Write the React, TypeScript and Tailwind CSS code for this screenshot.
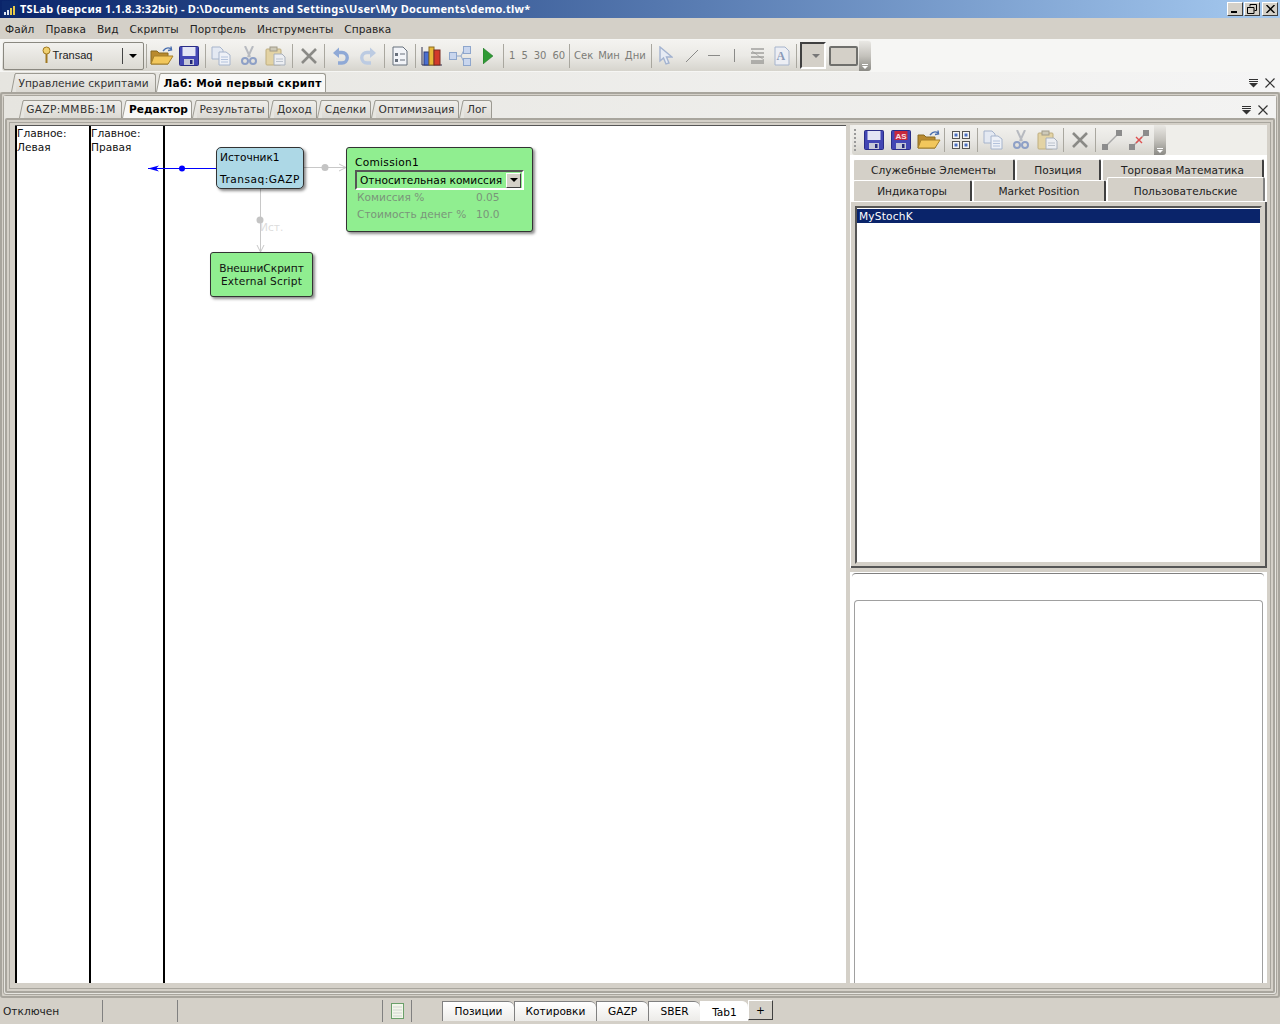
import React from "react";

const Sep = ({ w = "w-[6px]" }: { w?: string }) => (
  <div className={`${w} h-[24px] flex justify-center shrink-0`}>
    <div className="w-px h-full bg-[#a9a79f]" />
  </div>
);

const Slot = ({ w = "w-[27px]", children }: { w?: string; children: React.ReactNode }) => (
  <div className={`${w} h-[26px] flex items-center justify-center shrink-0`}>{children}</div>
);

const Folder = () => (
  <svg width="24" height="20" viewBox="0 0 24 20">
    <path d="M1 5 L1 18 L18 18 L18 7 L9 7 L7 5 Z" fill="#b98a2e" stroke="#8a6a20" />
    <path d="M4 10 L23 10 L18 18 L1 18 Z" fill="#f2c75c" stroke="#a5802a" />
    <path d="M13 5 Q17 0 21 3 M21 0.5 L21.5 4 L18 4.5" fill="none" stroke="#4a6fb0" strokeWidth="1.4" />
  </svg>
);
const Floppy = ({ red }: { red?: boolean }) => (
  <svg width="20" height="20" viewBox="0 0 20 20">
    <rect x="0.5" y="0.5" width="19" height="19" rx="1" fill="#4347b4" stroke="#2a2d86" />
    <rect x="3.5" y="1" width="13" height="9" fill={red ? "#c8283c" : "#e3e5f4"} />
    {red && (
      <text x="10" y="8.5" textAnchor="middle" fontSize="8" fontWeight="bold" fill="#f8e0e4" fontFamily="Liberation Sans, sans-serif">
        AS
      </text>
    )}
    <rect x="5" y="13" width="10" height="6" fill="#c6c8d8" />
    <rect x="11" y="14" width="2.5" height="4" fill="#23287a" />
  </svg>
);
const CopyIc = () => (
  <svg width="22" height="20" viewBox="0 0 22 20">
    <path d="M1 1 H9 L12 4 V13 H1 Z" fill="#e4e9f2" stroke="#a6b4cc" />
    <path d="M8 6 H15 L19 9 V19 H8 Z" fill="#eef1f7" stroke="#a6b4cc" />
    <path d="M10 11 H17 M10 13.5 H17 M10 16 H17" stroke="#b3c2dc" />
  </svg>
);
const CutIc = () => (
  <svg width="16" height="20" viewBox="0 0 16 20">
    <path d="M4 0 L9 11 M12 0 L7 11" stroke="#b7bac0" strokeWidth="2" fill="none" />
    <circle cx="4" cy="15" r="3" fill="none" stroke="#8ea0c6" strokeWidth="2" />
    <circle cx="12" cy="15" r="3" fill="none" stroke="#8ea0c6" strokeWidth="2" />
  </svg>
);
const PasteIc = () => (
  <svg width="22" height="20" viewBox="0 0 22 20">
    <rect x="1" y="3" width="15" height="16" rx="1" fill="#e3d3a4" stroke="#bfae7e" />
    <rect x="5" y="1" width="7" height="4" fill="#cdc9b8" stroke="#a09a88" />
    <path d="M9 8 H17 L20 11 V19 H9 Z" fill="#eceef2" stroke="#a8b0bc" />
    <path d="M11 13 H18 M11 15.5 H18" stroke="#bcc3cd" />
  </svg>
);
const XIc = () => (
  <svg width="18" height="18" viewBox="0 0 18 18">
    <path d="M2 2 L16 16 M16 2 L2 16" stroke="#8a8a86" strokeWidth="2.6" />
  </svg>
);
const Undo = ({ flip }: { flip?: boolean }) => (
  <svg width="18" height="18" viewBox="0 0 18 18" className={flip ? "-scale-x-100" : ""}>
    <path d="M4 5.5 H10 A5 5 0 0 1 10 16 H6" fill="none" stroke={flip ? "#bccbe2" : "#8fa9d6"} strokeWidth="3.4" />
    <path d="M1 6 L7 0.5 L7 11 Z" fill={flip ? "#bccbe2" : "#8fa9d6"} />
  </svg>
);
const DocIc = () => (
  <svg width="16" height="20" viewBox="0 0 16 20">
    <path d="M1 1 H11 L15 5 V19 H1 Z" fill="#f2f4f8" stroke="#67707c" />
    <rect x="3" y="7" width="3" height="3" fill="#68707c" />
    <rect x="3" y="13" width="3" height="3" fill="#68707c" />
    <path d="M8 8 H13 M8 14 H13" stroke="#68707c" />
  </svg>
);
const ChartIc = () => (
  <svg width="22" height="22" viewBox="0 0 22 22">
    <path d="M1 2 V20 H21" stroke="#303050" fill="none" />
    <rect x="3" y="7" width="5" height="13" fill="#4a6fd0" stroke="#2a3a7a" />
    <rect x="8" y="2" width="5" height="18" fill="#e8b93a" stroke="#8a6a20" />
    <rect x="13" y="5" width="6" height="15" fill="#d23a2a" stroke="#7a2a20" />
  </svg>
);
const FlowIc = () => (
  <svg width="22" height="20" viewBox="0 0 22 20">
    <path d="M7 10 H12 L15 4 M12 10 L15 16" stroke="#8ea6cc" fill="none" />
    <rect x="0.5" y="6.5" width="7" height="7" fill="#c9d6ee" stroke="#8ea6cc" />
    <rect x="14.5" y="0.5" width="7" height="7" fill="#c9d6ee" stroke="#8ea6cc" />
    <rect x="14.5" y="12.5" width="7" height="7" fill="#c9d6ee" stroke="#8ea6cc" />
  </svg>
);
const Play = () => (
  <svg width="10" height="16" viewBox="0 0 10 16">
    <path d="M0 0 L10 8 L0 16 Z" fill="#2f9a35" stroke="#1e6e24" strokeWidth="0.5" />
  </svg>
);
const Cursor = () => (
  <svg width="14" height="20" viewBox="0 0 14 20">
    <path d="M1 1 L1 15 L4.5 12 L7 18 L10 17 L7.5 11 L13 11 Z" fill="#e6ebf4" stroke="#a3b3d0" strokeWidth="1.4" />
  </svg>
);
const LinesIc = () => (
  <svg width="14" height="16" viewBox="0 0 14 16">
    <path d="M0 1 H13 M0 5 H13 M0 9 H13 M0 13 H13 M0 15 H13" stroke="#7b7b78" />
    <path d="M1 3 L13 12" stroke="#9a9a96" strokeWidth="0.7" />
  </svg>
);
const AIc = () => (
  <svg width="16" height="20" viewBox="0 0 16 20">
    <path d="M1 1 H11 L15 5 V19 H1 Z" fill="#eceef4" stroke="#a6b4cc" />
  </svg>
);
const GridIc = () => (
  <svg width="18" height="18" viewBox="0 0 18 18">
    {[0, 10].map((x) =>
      [0, 10].map((y) => (
        <g key={`${x}-${y}`}>
          <rect x={x + 0.5} y={y + 0.5} width="7" height="7" fill="#f4f4f4" stroke="#555" />
          <rect x={x + 2.5} y={y + 2.5} width="3" height="3" fill="#4a6fc0" />
        </g>
      ))
    )}
  </svg>
);
const Link = ({ broken }: { broken?: boolean }) => (
  <svg width="20" height="20" viewBox="0 0 20 20">
    <path d="M4 16 L16 4" stroke="#a8a8a8" strokeWidth="1.4" />
    <rect x="0" y="14" width="6" height="6" fill="#8c8c8c" />
    <rect x="14" y="0" width="6" height="6" fill="#8c8c8c" />
    {broken && <path d="M7 7 L13 13 M13 7 L7 13" stroke="#e05050" strokeWidth="1.4" />}
  </svg>
);
const Overflow = () => (
  <div className="w-[12px] h-[30px] rounded-r-[3px] bg-gradient-to-b from-[#e9e8e4] via-[#c4c2bc] to-[#8b8a85] flex flex-col items-center justify-end pb-[2px] gap-px">
    <div className="w-[6px] h-px bg-white" />
    <div className="border-x-[3px] border-t-[3px] border-x-transparent border-t-white" />
  </div>
);
const Chevron = () => (
  <svg width="11" height="9" viewBox="0 0 11 9">
    <path d="M1 0.5 H10 M1 2.5 H10" stroke="#333" strokeWidth="1.2" />
    <path d="M1 4 H10 L5.5 8.5 Z" fill="#333" />
  </svg>
);
const Cross = () => (
  <svg width="10" height="10" viewBox="0 0 10 10">
    <path d="M0.5 0.5 L9.5 9.5 M9.5 0.5 L0.5 9.5" stroke="#333" strokeWidth="1.2" />
  </svg>
);
const WinBtn = ({ children }: { children: React.ReactNode }) => (
  <div className="w-[16px] h-[14px] bg-[#d4d0c8] border border-t-white border-l-white border-r-[#404040] border-b-[#404040] flex items-center justify-center">
    {children}
  </div>
);

const TopTab = ({ label, active, w, h = "h-[19px]", extra = "" }: { label: string; active?: boolean; w: string; h?: string; extra?: string }) => (
  <div className={`${w} ${h} shrink-0 relative pl-[4px]`}>
    <svg className="absolute left-0 top-0 h-full" width="5" viewBox="0 0 5 19" preserveAspectRatio="none">
      <path d="M0 19 L4 1 L5 0 V19 Z" fill={active ? "#f8f8f6" : "#e6e5e0"} />
      <path d="M0.5 19 L4 1 L5 0.5" fill="none" stroke="#9c9a92" />
    </svg>
    <div
      className={`h-full flex items-center justify-center rounded-tr-[3px] border-t border-r border-[#9c9a92] ${extra} ${
        active ? "bg-[#f8f8f6] font-bold text-black" : "bg-gradient-to-b from-[#efeeea] to-[#dcdad4] text-[#333]"
      }`}
    >
      {label}
    </div>
  </div>
);

const SideTab = ({ label, w, active }: { label: string; w: string; active?: boolean }) => (
  <div
    className={`${w} shrink-0 bg-[#d4d0c8] flex items-center justify-center rounded-t-[2px] text-[#222] ${
      active
        ? "h-[24px] -mt-[3px] pt-[3px] border-t border-l border-white border-r-2 border-r-[#808080]"
        : "h-[21px] border-t border-l border-white border-r-2 border-r-[#404040]"
    }`}
  >
    {label}
  </div>
);

const BottomTab = ({ label, w, active }: { label: string; w: string; active?: boolean }) => (
  <div
    className={`${w} h-[20px] shrink-0 flex items-center justify-center rounded-tr-[6px] border-t border-l border-[#808080] ${
      active ? "bg-white pt-[2px] border-t-white border-l-white" : "bg-gradient-to-b from-white to-[#ecebe8]"
    }`}
  >
    {label}
  </div>
);

export default function App() {
  return (
    <div className="w-[1280px] h-[1024px] overflow-hidden bg-[#d4d0c8] font-['DejaVu_Sans',sans-serif] text-[10.6px] leading-[13px] text-black flex flex-col">
      {/* Title bar */}
      <div className="h-[18px] shrink-0 bg-gradient-to-r from-[#0a246a] to-[#a6caf0] flex items-center pl-[2px] pr-[2px] text-white">
        <svg width="16" height="16" viewBox="0 0 16 16" className="shrink-0">
          <rect width="16" height="16" fill="#0d2a6e" />
          <rect x="2" y="11" width="2" height="3" fill="#dfe6f0" />
          <rect x="5" y="9" width="2" height="5" fill="#dfe6f0" />
          <rect x="8" y="7" width="2" height="7" fill="#e6c84a" />
          <rect x="11" y="5" width="2" height="9" fill="#e6c84a" />
        </svg>
        <span className="ml-[2px] -mt-[2px] font-['Noto_Sans',sans-serif] font-bold text-[11px] tracking-[0.27px] whitespace-nowrap">
          TSLab (версия 1.1.8.3:32bit) - D:\Documents and Settings\User\My Documents\demo.tlw*
        </span>
        <div className="ml-auto flex items-center">
          <WinBtn>
            <div className="w-[6px] h-[2px] bg-black mt-[6px] -ml-[2px]" />
          </WinBtn>
          <div className="ml-[1px]">
            <WinBtn>
              <svg width="10" height="10" viewBox="0 0 10 10">
                <path d="M3 2.5 V0.5 H9.5 V6.5 H7.5 M0.5 3.5 H7 V9.5 H0.5 Z M0.5 3.5 H7" fill="none" stroke="#000" />
              </svg>
            </WinBtn>
          </div>
          <div className="ml-[2px]">
            <WinBtn>
              <svg width="9" height="8" viewBox="0 0 9 8">
                <path d="M0.5 0 L8.5 8 M8.5 0 L0.5 8" stroke="#000" strokeWidth="1.4" />
              </svg>
            </WinBtn>
          </div>
        </div>
      </div>

      {/* Menu */}
      <div className="h-[21px] shrink-0 flex items-center pl-[5px] pt-[2px] gap-[11px] text-[#222]">
        {["Файл", "Правка", "Вид", "Скрипты", "Портфель", "Инструменты", "Справка"].map((m) => (
          <span key={m} className="tracking-[0.04px]">{m}</span>
        ))}
      </div>

      {/* Toolbar band */}
      <div className="h-[33px] shrink-0 bg-[#f6f6f4] pl-[2px] pt-[1px] flex">
        <div className="h-[31px] w-[869px] flex items-center rounded-[3px] bg-gradient-to-b from-[#f4f3f0] via-[#ebeae6] to-[#d6d4cd] text-[#7c7c78] text-[10px]">
          <div className="w-[141px] ml-px h-[28px] shrink-0 border border-[#8a8880] rounded-[2px] bg-gradient-to-b from-[#f2f1ee] to-[#dcdad3] flex items-center text-[#222] text-[11px]">
            <div className="flex-1 flex items-center justify-center pl-[8px] pb-px">
              <svg width="9" height="18" viewBox="0 0 9 18" className="mr-[2px]">
                <circle cx="4.5" cy="4.5" r="3.5" fill="#f0d070" stroke="#a07820" />
                <path d="M4.5 8 V17" stroke="#a07820" strokeWidth="2" />
              </svg>
              <span className="font-['Liberation_Sans',sans-serif]">Transaq</span>
            </div>
            <div className="w-px h-[16px] bg-[#444]" />
            <div className="w-[20px] flex justify-center">
              <div className="border-x-[4px] border-t-[4px] border-x-transparent border-t-black" />
            </div>
          </div>
          <Sep w="w-[4px]" />
          <Slot><Folder /></Slot>
          <Slot><Floppy /></Slot>
          <Sep />
          <Slot><CopyIc /></Slot>
          <Slot><CutIc /></Slot>
          <Slot><PasteIc /></Slot>
          <Sep />
          <Slot><XIc /></Slot>
          <Sep w="w-[5px]" />
          <Slot><Undo /></Slot>
          <Slot><Undo flip /></Slot>
          <Sep />
          <Slot w="w-[25px]"><DocIc /></Slot>
          <Sep />
          <Slot w="w-[28px]"><ChartIc /></Slot>
          <Slot w="w-[28px]"><FlowIc /></Slot>
          <Slot w="w-[28px]"><Play /></Slot>
          <Sep w="w-[3px]" />
          <div className="w-[63px] shrink-0 flex items-center gap-[6px] pl-[4px] whitespace-nowrap">
            <span>1</span><span>5</span><span>30</span><span>60</span>
          </div>
          <Sep w="w-[3px]" />
          <div className="w-[79px] shrink-0 flex items-center gap-[5px] pl-[3px] whitespace-nowrap">
            <span>Сек</span><span>Мин</span><span>Дни</span>
          </div>
          <Sep w="w-[3px]" />
          <Slot w="w-[26px]"><Cursor /></Slot>
          <Slot w="w-[25px]">
            <svg width="14" height="14" viewBox="0 0 14 14"><path d="M1 13 L13 1" stroke="#8a8a88" /></svg>
          </Slot>
          <Slot w="w-[19px]">
            <div className="w-[12px] h-px bg-[#8a8a88]" />
          </Slot>
          <Slot w="w-[23px]">
            <div className="w-px h-[13px] bg-[#8a8a88]" />
          </Slot>
          <Slot w="w-[23px]"><LinesIc /></Slot>
          <Slot w="w-[25px]">
            <div className="relative">
              <AIc />
              <span className="absolute left-[3px] top-[4px] text-[12px] font-bold font-['Liberation_Serif',serif] text-[#8a9ab8]">A</span>
            </div>
          </Slot>
          <div className="ml-[1px] shrink-0"><Sep w="w-[3px]" /></div>
          <div className="w-[26px] h-[27px] ml-[2px] shrink-0 border-2 border-t-[#404040] border-l-[#404040] border-r-white border-b-white bg-[#d4d0c8] flex justify-end items-center pr-[4px]">
            <div className="border-x-[4px] border-t-[4px] border-x-transparent border-t-[#777]" />
          </div>
          <div className="w-[29px] h-[20px] ml-[3px] shrink-0 bg-[#d4d0c8] border-2 border-[#6f6f6c] rounded-[2px]" />
          <div className="ml-auto"><Overflow /></div>
        </div>
      </div>

      {/* Top tabs */}
      <div className="h-[20px] shrink-0 bg-gradient-to-r from-[#e6e5e0] to-[#f5f5f5] flex items-end pl-[11px] relative">
        <TopTab label="Управление скриптами" w="w-[145px]" extra="pr-[3px]" />
        <TopTab label="Лаб: Мой первый скрипт" w="w-[170px]" active extra="tracking-[0.3px]" />
        <div className="ml-auto flex items-center gap-[6px] pr-[5px] pb-[4px]">
          <Chevron />
          <Cross />
        </div>
      </div>

      {/* Outer frame */}
      <div className="h-[906px] shrink-0 border-2 border-[#a8a59d] rounded-[3px] mx-0 p-px bg-[#d4d0c8]">
        <div className="h-full border border-[#a8a59d] rounded-[3px] flex flex-col bg-[#e6e5e0]">
          {/* inner tabs */}
          <div className="h-[22px] shrink-0 pl-[15px] flex items-end bg-gradient-to-r from-[#e6e5e0] to-[#f3f3f2]">
            {[
              ["GAZP:ММВБ:1М", "w-[103px]", "tracking-[0.4px] pr-[2px]"],
              ["Редактор", "w-[70px]", ""],
              ["Результаты", "w-[77px]", ""],
              ["Доход", "w-[48px]", ""],
              ["Сделки", "w-[54px]", ""],
              ["Оптимизация", "w-[88px]", ""],
              ["Лог", "w-[33px]", ""],
            ].map(([l, w, x]) => (
              <TopTab key={l} label={l} w={w} h="h-[18px]" extra={x} active={l === "Редактор"} />
            ))}
            <div className="ml-auto flex items-center gap-[6px] pr-[8px] pb-[3px]">
              <Chevron />
              <Cross />
            </div>
          </div>
          {/* content frame */}
          <div className="flex-1 min-h-0 border-2 border-[#a8a59d] mx-[1px] mb-[1px] rounded-[2px] p-[2px] bg-[#d4d0c8]">
            <div className="h-full border border-[#a8a59d] flex pl-[5px] pt-[2px] pb-[5px] pr-[3px]">
              {/* Canvas */}
              <div className="w-[831px] h-full shrink-0 relative bg-white border-t border-t-[#555] overflow-hidden flex">
                <div className="w-[74px] h-full shrink-0 border-l-2 border-black pt-px text-[#111]">
                  <div>Главное:</div>
                  <div className="mt-px">Левая</div>
                </div>
                <div className="w-[74px] h-full shrink-0 border-l-2 border-black pt-px text-[#111]">
                  <div>Главное:</div>
                  <div className="mt-px">Правая</div>
                </div>
                <div className="flex-1 border-l-2 border-black" />

                <svg className="absolute left-0 top-0" width="540" height="140">
                  <path d="M133 42.5 H201" stroke="#0000ff" />
                  <circle cx="167" cy="42.5" r="3" fill="#0000ff" />
                  <path d="M133 42.5 L144 39.5 L141 42.5 L144 45.5 Z" fill="#0000ff" />
                  <path d="M288 41.5 H331" stroke="#c8c8c8" />
                  <circle cx="310" cy="41.5" r="3.5" fill="#c4c4c4" />
                  <path d="M324 38 L331 41.5 L324 45" fill="none" stroke="#c8c8c8" />
                  <path d="M245.5 62 V126" stroke="#c8c8c8" />
                  <circle cx="245" cy="94" r="3.5" fill="#c4c4c4" />
                  <path d="M242 119 L245.5 126 L249 119" fill="none" stroke="#c8c8c8" />
                </svg>
                <span className="absolute left-[245px] top-[95px] text-[#dcdcdc]">Ист.</span>

                <div className="absolute left-[201px] top-[21px] w-[88px] h-[42px] bg-[#add8e6] border border-[#333] rounded-[5px] shadow-[2px_2px_3px_rgba(0,0,0,0.45)] pl-[3px] pt-[3px]">
                  <div>Источник1</div>
                  <div className="mt-[9px] whitespace-nowrap tracking-[0.5px]">Transaq:GAZP</div>
                </div>
                <div className="absolute left-[195px] top-[126px] w-[103px] h-[45px] bg-[#90ee90] border border-[#333] rounded-[3px] shadow-[2px_2px_3px_rgba(0,0,0,0.45)] flex flex-col items-center justify-center text-[#111]">
                  <div>ВнешниСкрипт</div>
                  <div className="tracking-[0.2px]">External Script</div>
                </div>
                <div className="absolute left-[331px] top-[21px] w-[187px] h-[85px] bg-[#90ee90] border border-[#333] rounded-[3px] shadow-[2px_2px_3px_rgba(0,0,0,0.45)] pl-[8px] pt-[8px]">
                  <div className="tracking-[0.3px]">Comission1</div>
                  <div className="w-[169px] h-[20px] mt-[1px] border-2 border-t-[#555] border-l-[#555] border-r-white border-b-white bg-[#90ee90] flex items-center pl-[3px] whitespace-nowrap">
                    <span className="flex-1">Относительная комиссия</span>
                    <div className="w-[15px] h-[15px] mr-px bg-[#d4d0c8] border border-t-white border-l-white border-r-[#404040] border-b-[#404040] flex items-center justify-center">
                      <div className="border-x-[4px] border-t-[4px] border-x-transparent border-t-black" />
                    </div>
                  </div>
                  <div className="flex pl-[2px] h-[15px] items-center text-[#7a957a]">
                    <span className="w-[119px]">Комиссия %</span>
                    <span>0.05</span>
                  </div>
                  <div className="flex pl-[2px] h-[18px] items-center text-[#7a957a]">
                    <span className="w-[119px]">Стоимость денег %</span>
                    <span>10.0</span>
                  </div>
                </div>
              </div>

              {/* Right */}
              <div className="flex-1 min-w-0 ml-[4px] flex flex-col">
                <div className="h-[30px] shrink-0 flex items-center pl-[2px] bg-[#efeeea]">
                  <div className="h-[30px] w-[314px] flex items-center rounded-[3px] bg-gradient-to-b from-[#f2f1ee] via-[#e8e7e3] to-[#d6d4cd]">
                    <div className="w-[6px] h-[22px] ml-[2px] border-l-2 border-dotted border-[#999]" />
                    <Slot w="w-[27px]"><Floppy /></Slot>
                    <Slot w="w-[28px]"><Floppy red /></Slot>
                    <Slot w="w-[27px]"><Folder /></Slot>
                    <Sep w="w-[5px]" />
                    <Slot w="w-[28px]"><GridIc /></Slot>
                    <Sep w="w-[5px]" />
                    <Slot w="w-[27px]"><CopyIc /></Slot>
                    <Slot w="w-[27px]"><CutIc /></Slot>
                    <Slot w="w-[27px]"><PasteIc /></Slot>
                    <Sep w="w-[5px]" />
                    <Slot w="w-[27px]"><XIc /></Slot>
                    <Sep w="w-[5px]" />
                    <Slot w="w-[27px]"><Link /></Slot>
                    <Slot w="w-[27px]"><Link broken /></Slot>
                    <div className="ml-auto"><Overflow /></div>
                  </div>
                </div>
                <div className="flex-1 min-h-0 bg-white flex flex-col">
                  <div className="pt-[4px] pl-[3px] bg-white">
                    <div className="flex gap-px h-[21px]">
                      <SideTab label="Служебные Элементы" w="w-[162px]" />
                      <SideTab label="Позиция" w="w-[85px]" />
                      <SideTab label="Торговая Математика" w="w-[162px]" />
                    </div>
                    <div className="flex gap-px h-[22px]">
                      <SideTab label="Индикаторы" w="w-[119px]" />
                      <SideTab label="Market Position" w="w-[133px]" />
                      <SideTab label="Пользовательские" w="w-[158px]" active />
                    </div>
                  </div>
                  <div className="h-[366px] shrink-0 bg-[#d4d0c8] border-r-2 border-b-2 border-[#555] pt-[4px] pl-[4px] pr-[3px] pb-[2px] ml-[1px]">
                    <div className="h-full bg-white border-2 border-t-[#555] border-l-[#555] border-r-[#d4d0c8] border-b-[#d4d0c8]">
                      <div className="h-[14px] mt-px bg-[#0a246a] text-white pl-[2px] flex items-center tracking-[0.2px]">MyStochK</div>
                    </div>
                  </div>
                  <div className="h-[4px] shrink-0 bg-[#d4d0c8]" />
                  <div className="flex-1 min-h-0 pl-[2px] pr-[3px] pt-px bg-white">
                    <div className="h-full border-t border-[#808080] rounded-t-[4px] pt-[26px] pl-[2px] pr-[1px]">
                      <div className="h-full border-t border-l border-r border-[#a0a0a0] rounded-t-[4px]" />
                    </div>
                  </div>
                </div>
              </div>
            </div>
          </div>
        </div>
      </div>

      {/* Status */}
      <div className="flex-1 min-h-0 flex items-stretch pt-[2px] pb-[2px]">
        <div className="w-[103px] border-r border-[#808080] pl-[3px] flex items-center text-[#222]">Отключен</div>
        <div className="w-[75px] border-r border-[#808080]" />
        <div className="w-[205px] border-r border-[#808080]" />
        <div className="w-[29px] border-r border-[#808080] flex items-center justify-center">
          <svg width="13" height="16" viewBox="0 0 13 16">
            <rect x="0.5" y="0.5" width="12" height="15" fill="#f2f6ea" stroke="#6aa06a" />
            <path d="M2 4 H11 M2 7 H11 M2 10 H11 M2 13 H11" stroke="#d0d4d0" />
          </svg>
        </div>
        <div className="flex items-end pl-[30px] pb-px">
          <BottomTab label="Позиции" w="w-[72px]" />
          <BottomTab label="Котировки" w="w-[82px]" />
          <BottomTab label="GAZP" w="w-[52px]" />
          <BottomTab label="SBER" w="w-[52px]" />
          <BottomTab label="Tab1" w="w-[48px]" active />
          <div className="w-[25px] h-[20px] bg-[#d4d0c8] border border-t-white border-l-white border-r-[#404040] border-b-[#404040] flex items-center justify-center mb-px">
            +
          </div>
        </div>
      </div>
    </div>
  );
}
